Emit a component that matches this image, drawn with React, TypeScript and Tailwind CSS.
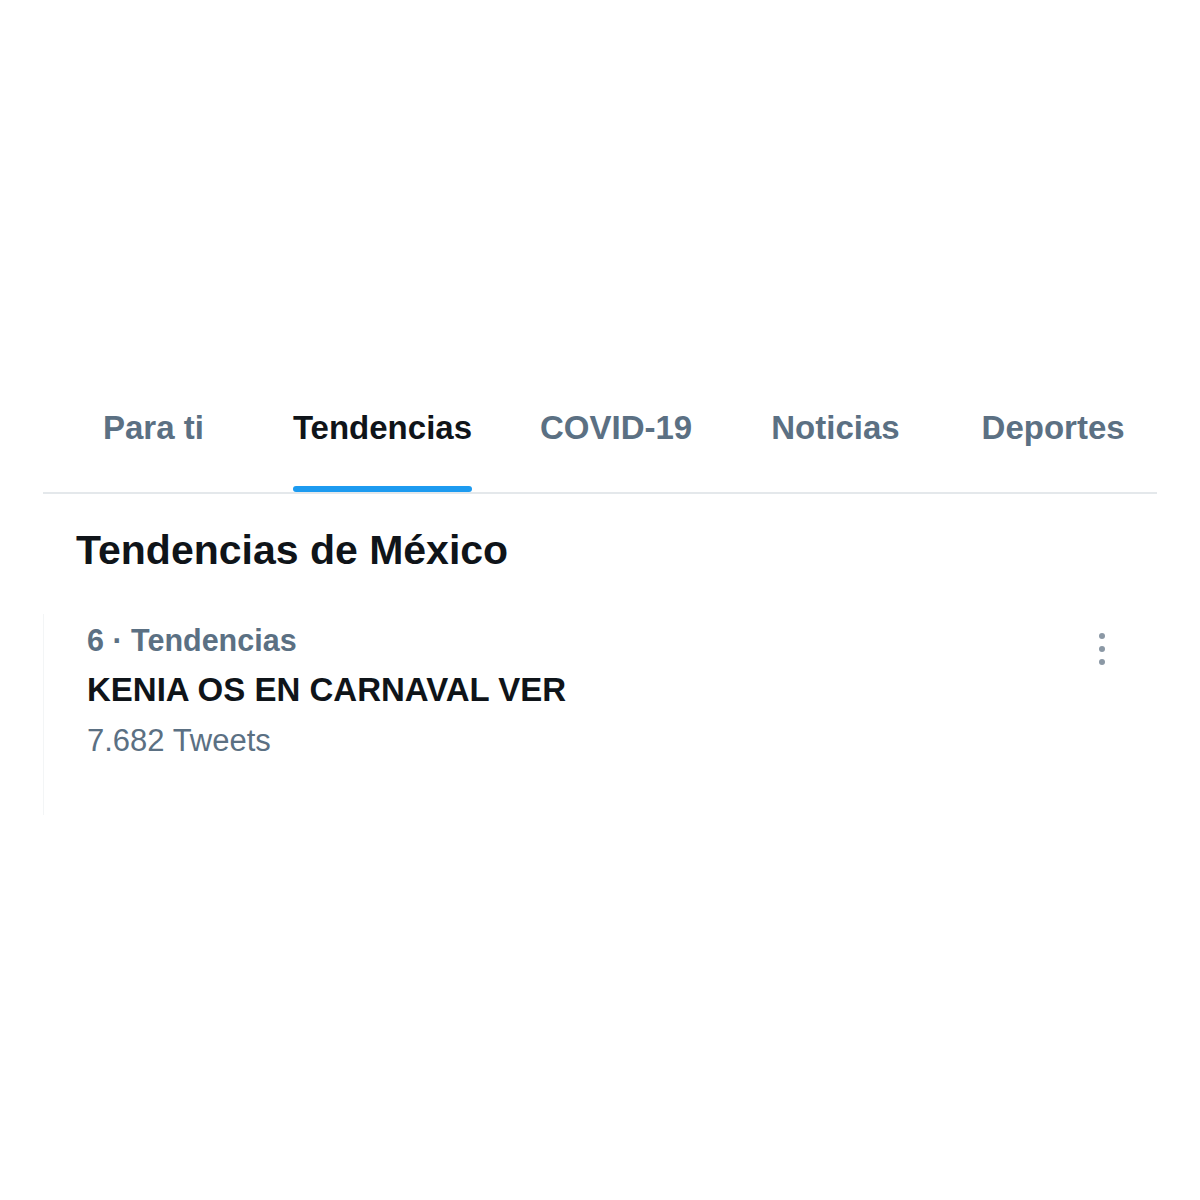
import React from 'react'

const tabs = [
  { label: 'Para ti', ml: 'ml-[60px]' },
  { label: 'Tendencias', ml: 'ml-[89px]', active: true },
  { label: 'COVID-19', ml: 'ml-[68px]' },
  { label: 'Noticias', ml: 'ml-[79px]' },
  { label: 'Deportes', ml: 'ml-[82px]' },
]

export default function App() {
  return (
    <div
      className="w-[1200px] h-[1200px] bg-white overflow-hidden"
      style={{ fontFamily: '"Liberation Sans", Arial, sans-serif' }}
    >
      <div className="pt-[408px] px-[43px]">
        {/* Tabs */}
        <div className="flex border-b-2 border-[#e4e8eb]">
          {tabs.map((t) => (
            <div key={t.label} className={`${t.ml} flex flex-col`}>
              <span
                className={`text-[33px] leading-[40px] font-bold whitespace-nowrap ${
                  t.active ? 'text-[#0f1419]' : 'text-[#5b7083]'
                }`}
              >
                {t.label}
              </span>
              <div
                className={`mt-[38px] h-[6px] rounded-full ${t.active ? 'bg-[#1d9bf0]' : 'bg-transparent'}`}
              />
            </div>
          ))}
        </div>

        {/* Section heading */}
        <h2 className="mt-[32px] ml-[33px] text-[41px] leading-[48px] font-bold text-[#0f1419]">
          Tendencias de México
        </h2>

        {/* Trend item */}
        <div className="mt-[40px] border-l border-[#f3f5f6] flex justify-between pt-[8px] pb-[56px]">
          <div className="ml-[43px] flex flex-col">
            <span className="text-[30.5px] leading-[36px] font-bold text-[#5b7083]">
              6 · Tendencias
            </span>
            <span className="mt-[12px] text-[33px] leading-[40px] font-bold text-[#0f1419]">
              KENIA OS EN CARNAVAL VER
            </span>
            <span className="mt-[13px] text-[31px] leading-[36px] text-[#5b7083]">
              7.682 Tweets
            </span>
          </div>
          <div className="mr-[52px] mt-[11px] flex flex-col gap-[7px]">
            <span className="w-[6px] h-[6px] rounded-full bg-[#8b98a5]" />
            <span className="w-[6px] h-[6px] rounded-full bg-[#8b98a5]" />
            <span className="w-[6px] h-[6px] rounded-full bg-[#8b98a5]" />
          </div>
        </div>
      </div>
    </div>
  )
}
